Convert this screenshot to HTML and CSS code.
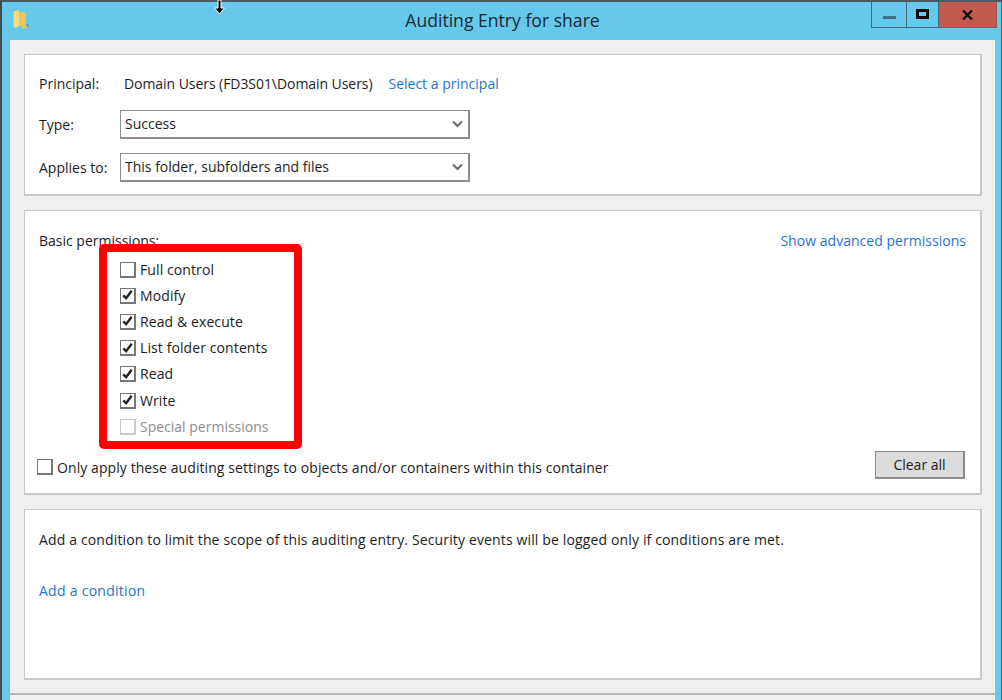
FILE: index.html
```html
<!DOCTYPE html>
<html lang="en">
<head>
<meta charset="utf-8">
<title>Auditing Entry for share</title>
<link rel="stylesheet" href="styles.css">
</head>
<body>
<div class="window">
  <header class="titlebar">
    <svg class="folder" width="16" height="20" viewBox="0 0 16 20"><path d="M0.500 1.500l5-1.500 1 2v14l-4.500 2-1.500-2z" fill="#f5da80"/><path d="M6.500 2h4.500l2 1.500v11.500l-6.500 1z" fill="#e8c660"/><path d="M9 15l4-.5 1 1.500 1 2-6 .5z" fill="#e9c45a"/><path d="M13 14h2l1 3h-2z" fill="#5a9fbc"/></svg>
    <h1 class="title">Auditing Entry for share</h1>
    <div class="controls">
      <div class="ctl ctl-min"><span class="min-bar"></span></div>
      <div class="ctl ctl-max"><span class="max-box"></span></div>
      <div class="ctl ctl-close"><svg width="11" height="10" viewBox="0 0 11 10"><path d="M1 0.500l9 9M10 0.500l-9 9" stroke="#111" stroke-width="2.400" fill="none"/></svg></div>
    </div>
  </header>
  <svg class="cursor" width="11" height="15" viewBox="0 0 11 15"><path d="M4 0h3v8h3.500L5.500 14 0.500 8H4z" fill="#000" stroke="#fff" stroke-width="1"/></svg>
  <main class="client">
    <section class="panel panel-top">
      <div class="row row-principal">
        <span class="label">Principal:</span>
        <span class="principal">Domain Users (FD3S01\Domain Users)</span>
        <a class="link">Select a principal</a>
      </div>
      <div class="row row-type">
        <span class="label">Type:</span>
        <div class="select"><span>Success</span><svg class="chev" width="11" height="8" viewBox="0 0 11 8"><path d="M1 1.500l4.500 4.500 4.500-4.500" stroke="#666" stroke-width="2" fill="none"/></svg></div>
      </div>
      <div class="row row-applies">
        <span class="label">Applies to:</span>
        <div class="select"><span>This folder, subfolders and files</span><svg class="chev" width="11" height="8" viewBox="0 0 11 8"><path d="M1 1.500l4.500 4.500 4.500-4.500" stroke="#666" stroke-width="2" fill="none"/></svg></div>
      </div>
    </section>
    <section class="panel panel-perm">
      <div class="perm-head">
        <span class="label label-wide">Basic permissions:</span>
        <a class="link link-adv">Show advanced permissions</a>
      </div>
      <ul class="perms">
        <li class="perm"><span class="box"></span>Full control</li>
        <li class="perm"><span class="box"><svg width="14" height="14" viewBox="0 0 14 14"><path d="M2.500 7.500l3 3 6-8" stroke="#222" stroke-width="2.600" fill="none"/></svg></span>Modify</li>
        <li class="perm"><span class="box"><svg width="14" height="14" viewBox="0 0 14 14"><path d="M2.500 7.500l3 3 6-8" stroke="#222" stroke-width="2.600" fill="none"/></svg></span>Read &amp; execute</li>
        <li class="perm"><span class="box"><svg width="14" height="14" viewBox="0 0 14 14"><path d="M2.500 7.500l3 3 6-8" stroke="#222" stroke-width="2.600" fill="none"/></svg></span>List folder contents</li>
        <li class="perm"><span class="box"><svg width="14" height="14" viewBox="0 0 14 14"><path d="M2.500 7.500l3 3 6-8" stroke="#222" stroke-width="2.600" fill="none"/></svg></span>Read</li>
        <li class="perm"><span class="box"><svg width="14" height="14" viewBox="0 0 14 14"><path d="M2.500 7.500l3 3 6-8" stroke="#222" stroke-width="2.600" fill="none"/></svg></span>Write</li>
        <li class="perm perm-off"><span class="box"></span>Special permissions</li>
      </ul>
      <div class="perm-foot">
        <div class="only"><span class="box"></span><span class="only-text">Only apply these auditing settings to objects and/or containers within this container</span></div>
        <button class="btn">Clear all</button>
      </div>
      <div class="highlight"></div>
    </section>
    <section class="panel panel-cond">
      <p class="cond-text">Add a condition to limit the scope of this auditing entry. Security events will be logged only if conditions are met.</p>
      <a class="link link-cond">Add a condition</a>
    </section>
    <div class="footer-line"></div>
  </main>
</div>
</body>
</html>
```
FILE: styles.css
```css
* { box-sizing: border-box; }
html, body { margin: 0; height: 100%; overflow: hidden; }
body { background: #fff; font-family: "Open Sans", "Noto Sans", sans-serif; font-size: 14px; color: #1c1c1c; }
.window { position: relative; height: 700px; width: 1001px; display: flex; flex-direction: column; background: #66c8ea; border-top: 2px solid #4a5a63; border-left: 2px solid #3d4a52; padding: 0 6px 0 8px; box-shadow: 1px 0 0 #55666f; }
.titlebar { height: 38px; display: flex; align-items: center; position: relative; flex: none; }
.folder { position: absolute; left: 3px; top: 8px; }
.title { margin: 0; flex: 1; text-align: center; font-size: 17.6px; font-weight: 400; color: #1a2a33; padding-bottom: 3px; }
.controls { position: absolute; top: 0; right: -2px; display: flex; height: 26px; }
.ctl { display: flex; align-items: center; justify-content: center; border: 1px solid #41697c; border-top: 0; border-left-width: 0; }
.ctl-min { width: 36px; border-left-width: 1px; }
.ctl-max { width: 32px; }
.ctl-close { width: 58px; background: #c3594f; border-color: #8a5a55; }
.min-bar { width: 13px; height: 3px; background: #3a7088; margin-top: 5px; }
.max-box { width: 13px; height: 10px; border: 3px solid #0a0a0a; margin-top: -1px; }
.cursor { position: absolute; left: 212px; top: -2px; }
.client { flex: 1; background: #efefef; padding: 14px 13px 0 14px; display: flex; flex-direction: column; }
.panel { background: #fff; border: 1px solid #c8c8c8; border-width: 1px 2px 2px 1px; position: relative; flex: none; }
.panel-top { height: 142px; padding: 0 14px; }
.row { display: flex; align-items: center; }
.label { width: 81px; flex: none; white-space: nowrap; }
.label-wide { width: auto; }
.row-principal { padding-top: 19px; height: 39px; line-height: 20px; }
.principal { margin: 0 16px 0 4px; letter-spacing: -0.06px; }
.link { color: #1f74cf; white-space: nowrap; }
.link-adv { letter-spacing: 0.03px; }
.row-type { height: 29px; margin-top: 16px; }
.row-applies { height: 29px; margin-top: 14px; }
.select { width: 350px; height: 29px; border: 1px solid #8c8c8c; border-width: 1px 2px 2px 1px; display: flex; align-items: center; justify-content: space-between; padding: 0 5px 2px 4px; background: #fff; }
.chev { flex: none; margin-top: 1px; }
.panel-perm { height: 285px; margin-top: 14px; padding: 0 14px; }
.perm-head { display: flex; justify-content: space-between; height: 20px; line-height: 20px; margin-top: 20px; }
.perms { list-style: none; margin: 5px 0 0 81px; padding: 0; display: flex; flex-direction: column; }
.perm { height: 26.2px; display: flex; align-items: center; gap: 4px; white-space: nowrap; letter-spacing: 0.1px; }
.perm .box { margin-top: 1px; }
.perm-off { color: #8d8d8d; letter-spacing: 0; }
.box { width: 16px; height: 16px; flex: none; border: 1px solid #777; border-width: 1px 2px 2px 1px; background: #fff; display: flex; align-items: center; justify-content: center; }
.perm-off .box { border-color: #c9c9c9; }
.perm-foot { display: flex; justify-content: space-between; align-items: flex-start; margin-top: 12px; margin-left: -2px; }
.only { display: flex; align-items: center; gap: 4px; white-space: nowrap; margin-top: 6px; height: 20px; }
.only-text { letter-spacing: 0.08px; }
.btn { width: 90px; height: 28px; margin-right: 1px; background: #dcdcdc; border: 1px solid #8a8a8a; border-width: 1px 2px 2px 1px; font: inherit; color: inherit; padding: 0; }
.highlight { position: absolute; left: 74px; top: 33px; width: 203px; height: 205px; border: 8px solid #fe0000; border-radius: 5px; }
.panel-cond { height: 171px; margin-top: 14px; padding: 0 14px; display: flex; flex-direction: column; align-items: flex-start; }
.cond-text { margin: 20px 0 0; line-height: 20px; white-space: nowrap; letter-spacing: 0.14px; }
.link-cond { margin-top: 31px; line-height: 20px; letter-spacing: 0.27px; }
.footer-line { height: 2px; background: #b5b5b5; margin: 13px -13px 0 -14px; }
```
